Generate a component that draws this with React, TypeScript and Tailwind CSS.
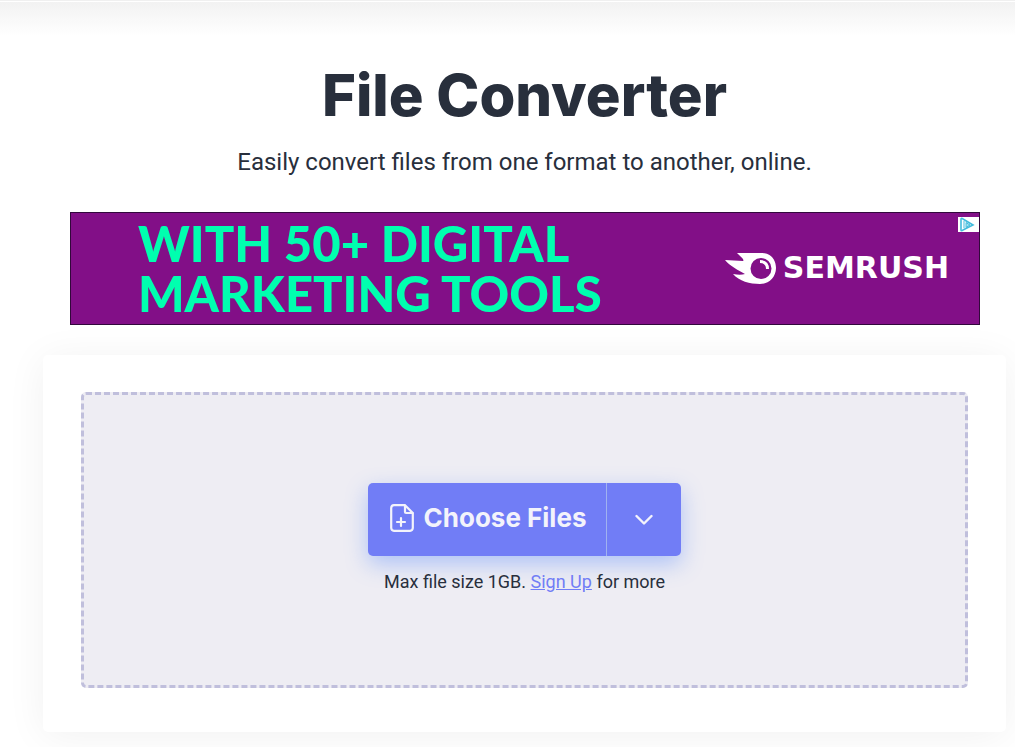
import { useState } from "react"

function SemrushLogo() {
  return (
    <svg viewBox="0 0 52 32" className="h-8 w-[52px] shrink-0" aria-hidden="true">
      <path
        fill="#fff"
        fillRule="evenodd"
        d="M12 1H37C46 1 51 8 51 16C51 25 44 32 35 32C25 32 14 29 8 22C13 23 17 23 20 22C13 18 5 14 0 8C6 8 12 9 18 9C20 8 15 4 12 1ZM36 6A10.5 10.5 0 1 0 36 27A10.5 10.5 0 1 0 36 6Z"
      />
      <path d="M35 9.5C40 9.5 42.5 12.5 42.5 17" fill="none" stroke="#fff" strokeWidth="3" />
    </svg>
  )
}

function AdChoicesIcon() {
  return (
    <svg viewBox="0 0 21 15" className="h-[15px] w-[21px]" aria-hidden="true">
      <path
        d="M3 2V13C3 14 4 14 5 13L15 8L5 2C4 1 3 1 3 2Z"
        fill="none"
        stroke="#42bbdc"
        strokeWidth="1.6"
      />
      <path d="M6 4V11" stroke="#42bbdc" />
      <path d="M8 5.5V10.5L12 8Z" fill="#9de0ee" stroke="#42bbdc" />
    </svg>
  )
}

function FilePlusIcon() {
  return (
    <svg
      viewBox="0 0 24 28"
      className="h-7 w-6 shrink-0"
      fill="none"
      stroke="currentColor"
      strokeWidth="2.2"
      strokeLinecap="round"
      strokeLinejoin="round"
      aria-hidden="true"
    >
      <path d="M4 1.2H15L22.8 9V24A3 3 0 0 1 20 26.8H4A3 3 0 0 1 1.2 24V4A3 3 0 0 1 4 1.2Z" />
      <path d="M15 1.5V8Q15 9 16 9H22.5" />
      <path d="M11 14V22M7 18H15" />
    </svg>
  )
}

function AdBanner() {
  return (
    <div className="relative mt-[34px] mr-[26px] ml-[27px] border border-[#32083c] bg-[#820f87]">
      <a href="#semrush" className="flex items-center justify-between pt-[5px] pb-[6px] pr-[30px] pl-[67px]">
        <span className="font-['Lato',sans-serif] text-[49px] leading-[50px] font-black whitespace-nowrap text-[#00ffaf]">
          WITH 50+ DIGITAL
          <br />
          MARKETING TOOLS
        </span>
        <span className="flex items-center gap-[6px]">
          <SemrushLogo />
          <span className="font-['DejaVu_Sans',sans-serif] text-[30px] leading-8 font-bold text-white">SEMRUSH</span>
        </span>
      </a>
      <a href="#adchoices" aria-label="AdChoices" className="absolute top-1 right-0 bg-white">
        <AdChoicesIcon />
      </a>
    </div>
  )
}

function FilePicker() {
  const [open, setOpen] = useState(false)

  return (
    <div className="flex rounded-[5px] bg-[#717df6] text-[#f3f3fb] shadow-[0_8px_22px_rgba(60,120,255,0.36)]">
      <button type="button" className="flex h-[73px] items-center gap-[10px] pr-5 pb-1 pl-[22px]">
        <FilePlusIcon />
        <span className="text-[26px] leading-8 font-bold">Choose Files</span>
      </button>
      <button
        type="button"
        aria-label="More sources"
        aria-expanded={open}
        onClick={() => setOpen(!open)}
        className="flex w-[75px] items-center justify-center border-l border-[#a0b2f0]"
      >
        <svg
          viewBox="0 0 18 12"
          className="h-3 w-[18px]"
          fill="none"
          stroke="currentColor"
          strokeWidth="2.4"
          strokeLinecap="round"
          strokeLinejoin="round"
        >
          <path d="M1.5 2L9 9.5L16.5 2" />
        </svg>
      </button>
    </div>
  )
}

export default function App() {
  return (
    <div className="min-h-screen bg-white font-['Inter','Open_Sans',sans-serif] text-[#282f3c]">
      <div className="h-px bg-[#f0f0f0]" />
      <div className="h-px bg-white" />
      <main className="bg-linear-to-b from-[#f2f2f2] to-white to-[34px] pt-[60px] pr-[9px] pb-[15px] pl-[43px]">
        <h1 className="text-center text-[58px] leading-[66px] font-extrabold">File Converter</h1>
        <p className="mt-[18px] text-center font-['Roboto',sans-serif] text-[24px] leading-8">
          Easily convert files from one format to another, online.
        </p>

        <AdBanner />

        <section className="mt-[30px] rounded-[5px] bg-white px-[38px] pt-[37px] pb-11 shadow-[0_4px_40px_rgba(0,0,0,0.06)]">
          <div className="flex flex-col items-center rounded-[5px] border-3 border-dashed border-[#c0bfdc] bg-[#eeedf3] pt-22 pb-[91px]">
            <FilePicker />
            <p className="mt-[14px] font-['Roboto',sans-serif] text-[18px] leading-6">
              Max file size 1GB.{" "}
              <a href="#signup" className="text-[#717df6] underline">
                Sign Up
              </a>{" "}
              for more
            </p>
          </div>
        </section>
      </main>
    </div>
  )
}
